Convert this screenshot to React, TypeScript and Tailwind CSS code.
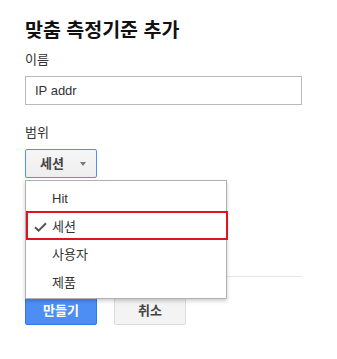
import { useState } from "react";

const FONT = { fontFamily: '"Liberation Sans", Arial, "Noto Sans CJK KR", sans-serif' };

const options = ["Hit", "세션", "사용자", "제품"];

export default function App() {
  const [name, setName] = useState("IP addr");
  const [scope, setScope] = useState("세션");

  return (
    <div className="min-h-[359px] w-[337px] bg-white px-[25px] pt-[18px] text-[#222]" style={FONT}>
      <h1 className="text-[19.5px] font-bold leading-[24px] text-[#111]">맞춤 측정기준 추가</h1>

      <div className="mt-[8px] text-[13px] leading-[20px] text-[#333]">이름</div>
      <input
        value={name}
        onChange={(e) => setName(e.target.value)}
        className="mt-[6px] box-border h-[29px] w-[277px] border border-[#b9b9b9] px-[9px] text-[13px] text-[#333] outline-none"
      />

      <div className="mt-[18px] text-[13px] leading-[20px] text-[#333]">범위</div>

      <div className="relative mt-[6px]">
        <button className="box-border flex h-[29px] w-[72px] items-center rounded-[2px] border border-[#4d90fe] bg-gradient-to-b from-[#f6f6f6] to-[#eeeeee] pl-[14px] text-[13px] font-bold text-[#444]">
          {scope}
          <span className="ml-[16px] h-0 w-0 border-x-[3.5px] border-t-[4px] border-x-transparent border-t-[#777]" />
        </button>

        {/* 열린 드롭다운 메뉴 */}
        <div className="absolute left-0 top-[31px] z-10 box-border h-[119px] w-[202px] border border-[#b0b0b0] bg-white pt-[4px] shadow-[0_2px_4px_rgba(0,0,0,0.2)]">
          {options.map((o) => (
            <div
              key={o}
              onClick={() => setScope(o)}
              className="relative flex h-[28px] cursor-pointer items-center pl-[26px] text-[13px] text-[#333]"
            >
              {o === scope && (
                <svg className="absolute left-[8px] top-[9px]" width="13" height="10" viewBox="0 0 13 10">
                  <path d="M1 5.2 L4.6 8.6 L12 1.2" fill="none" stroke="#555" strokeWidth="2" />
                </svg>
              )}
              {o}
            </div>
          ))}
          <div className="pointer-events-none absolute left-0 top-[30px] h-[29px] w-[202px] border-2 border-[#e0141e]" />
        </div>
      </div>

      <div className="mt-[98px] h-px w-[277px] bg-[#e5e5e5]" />

      <div className="mt-[20px] flex gap-[17px]">
        <button className="box-border h-[28px] w-[72px] rounded-[2px] border border-[#3079ed] bg-[#4d8ef5] text-[13px] font-bold text-white">
          만들기
        </button>
        <button className="box-border h-[28px] w-[72px] rounded-[2px] border border-[#dcdcdc] bg-[#f3f3f3] text-[13px] font-bold text-[#444]">
          취소
        </button>
      </div>
    </div>
  );
}
